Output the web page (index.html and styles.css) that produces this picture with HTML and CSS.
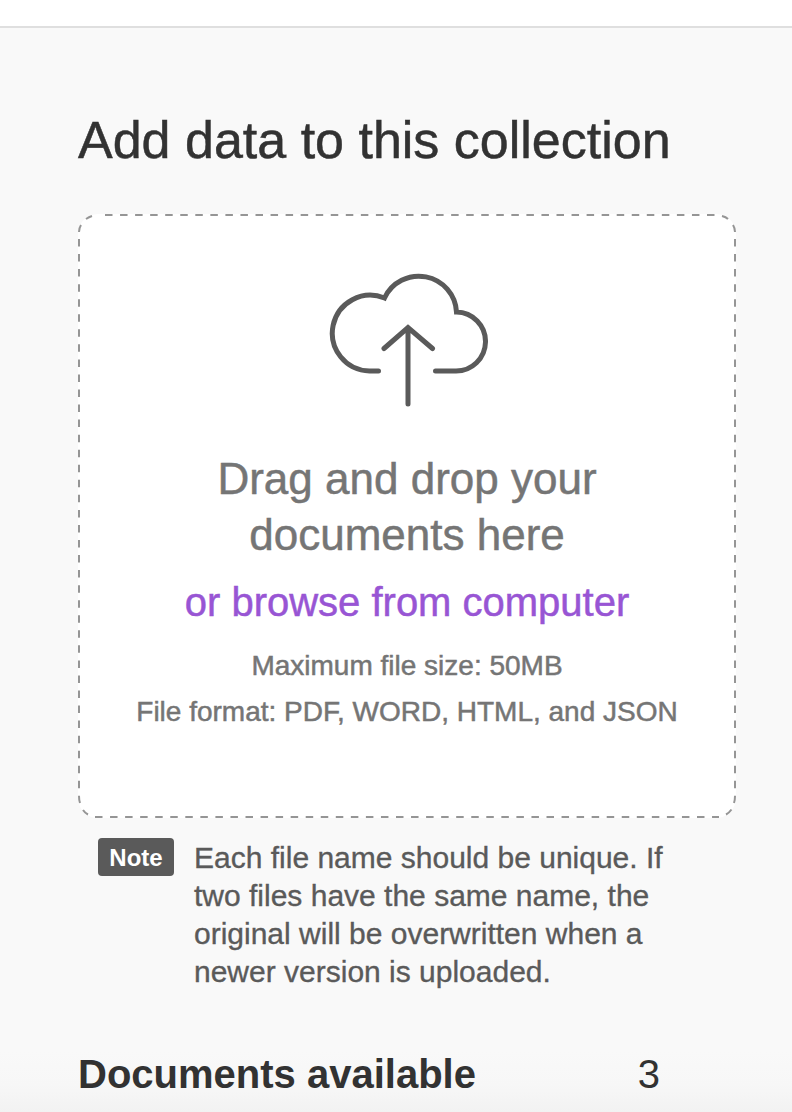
FILE: index.html
```html
<!DOCTYPE html>
<html lang="en">
<head>
<meta charset="utf-8">
<title>Add data to this collection</title>
<link rel="stylesheet" href="styles.css">
</head>
<body>
<header class="topbar"></header>
<main class="panel">
  <h1 class="title">Add data to this collection</h1>
  <section class="dropzone">
    <svg class="outline" width="658" height="604" viewBox="78 214 658 604" aria-hidden="true">
      <rect class="surface" x="78" y="214" width="658" height="604" rx="20"/>
      <path class="dashes" d="M105 215H715M95 817H719"/>
      <path class="dashes" d="M79 239V796M735 239V796"/>
      <path class="corners" d="M86 219Q89 217 92 216M79 232Q79 228 81 225M722 216Q726 217 728 219M733 225Q735 228 735 232M79 796Q79 800 80 803M735 796Q735 800 734 803M83 810Q85 813 88 814.500M726 814.500Q729 813 731.500 809.500"/>
    </svg>
    <svg class="cloud" width="160" height="136" viewBox="328 272 160 136" aria-hidden="true"><path d="M378.500 371H369.500A37.900 37.900 0 1 1 384.500 298A37.800 37.800 0 0 1 456.500 312A29.500 29.500 0 0 1 455.500 371H435.500M408 404V327.500M384 348.500L408 327.500L432.500 348.500"/></svg>
    <p class="lead">Drag and drop your<br>documents here</p>
    <a class="browse">or browse from computer</a>
    <p class="hint">Maximum file size: 50MB</p>
    <p class="hint">File format: PDF, WORD, HTML, and JSON</p>
  </section>
  <section class="note">
    <span class="tag">Note</span>
    <p class="message">Each file name should be unique. If<br>two files have the same name, the<br>original will be overwritten when a<br>newer version is uploaded.</p>
  </section>
  <section class="documents">
    <h2 class="label">Documents available</h2>
    <span class="count">3</span>
  </section>
</main>
</body>
</html>
```
FILE: styles.css
```css
* { box-sizing: border-box; }
body { margin: 0; height: 1112px; overflow: hidden; background: linear-gradient(#f9f9f9 1050px, #f7f7f7 1085px, #f2f2f2 1112px); color: #323232; font-family: "Liberation Sans", Arial, sans-serif; -webkit-text-stroke: 0.5px currentColor; }
h1, h2, p { margin: 0; font-weight: 400; }
.topbar { height: 28px; background: #fff; border-bottom: 2px solid #dfdfdf; }
.panel { padding: 84px 56px 0 78px; }
.title { font-size: 52px; line-height: 56px; white-space: nowrap; margin-bottom: 46px; }
.dropzone { position: relative; height: 604px; padding-top: 58px; display: flex; flex-direction: column; align-items: center; color: #757575; white-space: nowrap; }
.outline { position: absolute; inset: 0; fill: none; stroke: #959595; stroke-width: 2; }
.surface { fill: #fff; stroke: none; }
.dashes { stroke-dasharray: 7.5 7.55; }
.cloud { position: relative; margin-left: 2px; fill: none; stroke: #5a5a5a; stroke-width: 5; stroke-linecap: round; }
.lead, .browse, .hint { position: relative; text-align: center; }
.lead { margin-top: 43px; font-size: 44px; line-height: 56px; }
.browse { margin-top: 11px; font-size: 40px; line-height: 56px; color: #9855d4; }
.hint { margin-top: 13px; font-size: 28px; line-height: 46px; }
.hint + .hint { margin-top: 0; }
.note { display: flex; padding: 20px 0 0 20px; gap: 20px; color: #5a5a5a; }
.tag { width: 76px; height: 38px; background: #5a5a5a; color: #fff; border-radius: 4px; text-align: center; font-size: 24px; font-weight: 700; line-height: 39px; -webkit-text-stroke: 0; }
.message { padding-top: 1px; font-size: 30px; line-height: 38px; white-space: nowrap; -webkit-text-stroke: 0.35px currentColor; }
.documents { display: flex; justify-content: space-between; padding: 57px 76px 0 0; font-size: 40px; line-height: 52px; -webkit-text-stroke: 0; }
.label { font-size: 40px; font-weight: 700; }
```
